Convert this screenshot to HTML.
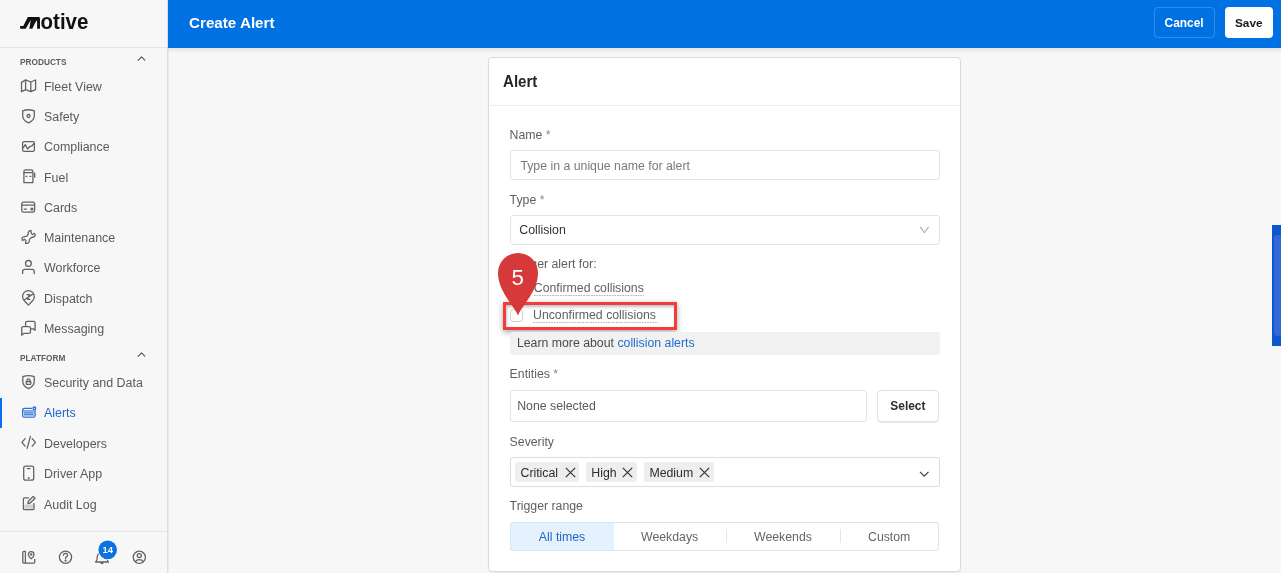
<!DOCTYPE html>
<html><head><meta charset="utf-8"><style>
html,body{margin:0;padding:0;}
body{width:1281px;height:573px;overflow:hidden;position:relative;background:#f7f7f7;font-family:"Liberation Sans", sans-serif;}
#w{position:absolute;left:0;top:0;width:1281px;height:573px;will-change:transform;}
.t{position:absolute;white-space:nowrap;line-height:1;}
.r{position:absolute;}
</style></head><body>
<div id="w">
<div class="r" style="left:0.00px;top:0.00px;width:167.00px;height:573.00px;background:#f7f7f7;"></div>
<div class="r" style="left:167.00px;top:0.00px;width:1.00px;height:573.00px;background:#dedede;"></div>
<div class="r" style="left:168.00px;top:48.00px;width:1.00px;height:525.00px;background:#ececec;"></div>
<div class="r" style="left:0.00px;top:47.00px;width:167.00px;height:1.00px;background:#e4e4e4;"></div>
<svg class="r" style="left:0;top:0" width="168" height="48" viewBox="0 0 168 48">
<path d="M20.1 28.8 V25.9 H23.3 L27.8 17 H38.6 Q40 17 40 18.4 V28.8 H37.1 V21.4 L36.4 20.4 L32.3 28.8 H29.3 L30.8 20 L25.7 28.8 Z" fill="#111"/>
<text x="40.6" y="28.8" font-family="Liberation Sans" font-weight="700" font-size="22.5" fill="#111" textLength="47.8" lengthAdjust="spacingAndGlyphs">otive</text>
</svg>
<div class="t" style="left:20.00px;top:57.73px;font-size:9.3px;color:#5c5c5c;font-weight:700;transform:scaleX(0.89);transform-origin:0 0;">PRODUCTS</div>
<div class="t" style="left:20.00px;top:354.03px;font-size:9.3px;color:#5c5c5c;font-weight:700;transform:scaleX(0.89);transform-origin:0 0;">PLATFORM</div>
<svg class="r" style="left:137px;top:56.3px" width="10" height="7" viewBox="0 0 10 7"><path d="M1.1 4.4 L4.5 0.9 L7.8 4.2" fill="none" stroke="#555" stroke-width="1.15" stroke-linecap="round" stroke-linejoin="round"/></svg>
<svg class="r" style="left:137px;top:352.0px" width="10" height="7" viewBox="0 0 10 7"><path d="M1.1 4.4 L4.5 0.9 L7.8 4.2" fill="none" stroke="#555" stroke-width="1.15" stroke-linecap="round" stroke-linejoin="round"/></svg>
<div class="t" style="left:44.00px;top:80.86px;font-size:12.45px;color:#5a5a5a;font-weight:400;">Fleet View</div>
<div class="t" style="left:44.00px;top:111.13px;font-size:12.45px;color:#5a5a5a;font-weight:400;">Safety</div>
<div class="t" style="left:44.00px;top:141.40px;font-size:12.45px;color:#5a5a5a;font-weight:400;">Compliance</div>
<div class="t" style="left:44.00px;top:171.67px;font-size:12.45px;color:#5a5a5a;font-weight:400;">Fuel</div>
<div class="t" style="left:44.00px;top:201.94px;font-size:12.45px;color:#5a5a5a;font-weight:400;">Cards</div>
<div class="t" style="left:44.00px;top:232.21px;font-size:12.45px;color:#5a5a5a;font-weight:400;">Maintenance</div>
<div class="t" style="left:44.00px;top:262.48px;font-size:12.45px;color:#5a5a5a;font-weight:400;">Workforce</div>
<div class="t" style="left:44.00px;top:292.75px;font-size:12.45px;color:#5a5a5a;font-weight:400;">Dispatch</div>
<div class="t" style="left:44.00px;top:323.02px;font-size:12.45px;color:#5a5a5a;font-weight:400;">Messaging</div>
<div class="t" style="left:44.00px;top:376.96px;font-size:12.45px;color:#5a5a5a;font-weight:400;">Security and Data</div>
<div class="t" style="left:44.00px;top:407.31px;font-size:12.45px;color:#1a66c9;font-weight:400;">Alerts</div>
<div class="t" style="left:44.00px;top:437.66px;font-size:12.45px;color:#5a5a5a;font-weight:400;">Developers</div>
<div class="t" style="left:44.00px;top:468.01px;font-size:12.45px;color:#5a5a5a;font-weight:400;">Driver App</div>
<div class="t" style="left:44.00px;top:499.16px;font-size:12.45px;color:#5a5a5a;font-weight:400;">Audit Log</div>
<div class="r" style="left:0.00px;top:398.00px;width:1.60px;height:30.00px;background:#0a6ef0;"></div>
<div class="r" style="left:0.00px;top:530.50px;width:167.00px;height:1.00px;background:#e2e2e2;"></div>
<svg class="r" style="left:0;top:0" width="168" height="573" viewBox="0 0 168 573" fill="none" stroke="#636363" stroke-width="1.3" stroke-linejoin="round" stroke-linecap="round">
<path d="M21.5 82.4 L25.6 79.9 L30.8 82 L35.6 80 V89.6 L30.8 91.7 L25.6 89.6 L21.5 91.7 Z M25.6 79.9 V89.6 M30.8 82 V91.7"/>
<path d="M22.7 110.9 Q28.5 108.6 34.3 110.9 V115.8 Q34.3 120.3 28.5 122.9 Q22.7 120.3 22.7 115.8 Z"/>
<circle cx="28.5" cy="116" r="1.5"/>
<rect x="22.6" y="141.6" width="11.8" height="9.7" rx="1.6"/>
<path d="M23.4 147.6 L25.3 144.6 L27.7 149 L29.9 146.4 L31.6 146.2 L33.8 143.8"/>
<path d="M23.9 182.6 V171.5 Q23.9 169.9 25.5 169.9 H31.3 Q32.9 169.9 32.9 171.5 V182.6 Z M23.9 172.6 H32.9 M25.9 176.3 H26.9 M29.9 176.3 H30.9 M34.7 173.2 V177.2"/>
<rect x="21.8" y="202.1" width="12.8" height="10.1" rx="1.8"/>
<path d="M21.8 205.2 H34.6 M24.2 209.1 H26.4"/>
<circle cx="31.9" cy="209.1" r="0.9" fill="#636363"/>
<path d="M28.4 232.2 Q29.2 230.6 30.9 230.5 L31.4 233.3 L32.4 234.5 L34.5 233.5 Q35.6 234.4 35 235.6 Q34.4 236.8 33.2 237.1 L31.6 237.5 L29.5 239.2 Q29.4 240.5 29.1 241.7 Q28.6 243.3 27.4 243.4 L25.5 243.4 Q25.6 242 26 240.6 L24.8 239.4 L22.5 240.4 Q21.9 239.3 22.1 238.3 Q22.6 237 23.7 236.8 L26.9 236.1 L28.1 234.3 Z"/>
<circle cx="28.4" cy="263.4" r="2.9"/>
<path d="M22.6 273.5 V271.4 Q22.6 269.3 24.7 269.3 H32.1 Q34.2 269.3 34.2 271.4 V273.5"/>
<path d="M28.45 305.1 L24.3 300.7 A5.9 5.9 0 1 1 32.6 300.7 Z M24.5 299.8 L33.4 293.6 M27 294.6 H29.5 L27.6 299.3 H29.9"/>
<path d="M25.6 326.4 V322.8 Q25.6 321.3 27.1 321.3 H33.6 Q35.1 321.3 35.1 322.8 V330.2 L33.2 328.9 H30.6"/>
<path d="M21.7 335.2 V328.1 Q21.7 326.6 23.2 326.6 H29 Q30.5 326.6 30.5 328.1 V331.8 Q30.5 333.3 29 333.3 H23.9 Z"/>
<path d="M22.8 376.7 Q28.5 374.4 34.2 376.7 V381.6 Q34.2 386.1 28.5 388.7 Q22.8 386.1 22.8 381.6 Z"/>
<path d="M27 381.5 V380.4 Q27 378.8 28.5 378.8 Q30 378.8 30 380.4 V381.5"/>
<rect x="26.2" y="381.5" width="4.6" height="2.8" rx="0.5"/>
<path d="M25.1 438.6 L21.9 442.4 L25.1 446.2 M32.2 438.6 L35.4 442.4 L32.2 446.2 M30.4 436.4 L27.2 448.4"/>
<rect x="23.7" y="466.2" width="10" height="14" rx="2"/>
<path d="M27.4 468.6 H30"/>
<circle cx="28.7" cy="478" r="0.35" fill="#636363"/>
<path d="M28.6 497.9 H24.6 Q23.4 497.9 23.4 499.1 V508.4 Q23.4 509.6 24.6 509.6 H32.8 Q34 509.6 34 508.4 V503.6"/>
<rect x="24.4" y="504.6" width="8.6" height="4" fill="#cfcfcf" stroke="none"/>
<path d="M27.8 503.6 L28.4 501.2 L33.2 496.4 L35 498.2 L30.2 503 Z"/>
<path d="M25.2 551.3 H24.1 Q22.8 551.3 22.8 552.6 V561.9 Q22.8 563.2 24.1 563.2 H33.4 Q34.7 563.2 34.7 561.9 V559.3 M25.4 551.3 V563.2"/>
<path d="M31.2 558.8 Q28.4 556.6 28.4 554.4 A2.8 2.8 0 0 1 34 554.4 Q34 556.6 31.2 558.8 Z"/>
<circle cx="31.2" cy="554.4" r="0.6" fill="#636363"/>
<circle cx="65.5" cy="557.2" r="6.1"/>
<path d="M63.5 555.3 Q63.5 553.3 65.6 553.3 Q67.6 553.3 67.6 555.1 Q67.6 556.6 65.6 557.4 V558.6"/>
<circle cx="65.6" cy="560.6" r="0.5" fill="#636363"/>
<path d="M95.6 562 Q97.2 560.6 97.2 557.6 Q97.2 552.6 102 552.6 Q106.8 552.6 106.8 557.6 Q106.8 560.6 108.4 562 Z M100.6 562 Q100.6 563.5 102 563.5 Q103.4 563.5 103.4 562"/>
<circle cx="139.3" cy="557.3" r="6.1"/>
<circle cx="139.3" cy="555.6" r="2"/>
<path d="M135.4 561.6 Q136.6 559.6 139.3 559.6 Q142 559.6 143.2 561.6"/>
<circle cx="107.7" cy="549.8" r="9.9" fill="#f7f7f7" stroke="none"/>
<circle cx="107.7" cy="549.8" r="9.3" fill="#0a72e3" stroke="none"/>
<text x="107.7" y="553.2" text-anchor="middle" font-family="Liberation Sans" font-weight="700" font-size="9.5" fill="#fff" stroke="none">14</text>
</svg>
<svg class="r" style="left:0;top:0" width="168" height="573" viewBox="0 0 168 573" fill="none" stroke="#2a6fd6" stroke-width="1.3" stroke-linejoin="round" stroke-linecap="round">
<rect x="22.7" y="408.4" width="12.3" height="8.8" rx="1.5"/>
<rect x="23.6" y="411.2" width="10.5" height="5.2" fill="#b6cdf2" stroke="none"/>
<path d="M22.7 410.8 H35 M24.5 412.8 H33 M24.5 414.6 H33" stroke-width="0.9"/>
<circle cx="34.4" cy="408.3" r="2.1" fill="#f7f7f7" stroke="none"/>
<circle cx="34.4" cy="408.3" r="1.3" fill="#f7f7f7"/>
</svg>
<div class="r" style="left:168.00px;top:0.00px;width:1113.00px;height:48.00px;background:#0071e3;"></div>
<div class="r" style="left:168.00px;top:48.00px;width:1113.00px;height:5.00px;background:linear-gradient(rgba(0,0,0,0.08),rgba(0,0,0,0));"></div>
<div class="t" style="left:189.00px;top:15.33px;font-size:15.2px;color:#ffffff;font-weight:700;">Create Alert</div>
<div class="r" style="left:1154.00px;top:7.00px;width:61.00px;height:31.00px;border:1px solid rgba(255,255,255,0.2);border-radius:4px;box-sizing:border-box;"></div>
<div class="t" style="left:1164.60px;top:17.93px;font-size:11.9px;color:#ffffff;font-weight:700;">Cancel</div>
<div class="r" style="left:1225.00px;top:7.00px;width:48.00px;height:31.00px;background:#fff;border-radius:4px;"></div>
<div class="t" style="left:1235.00px;top:18.01px;font-size:11.8px;color:#1a1a1a;font-weight:700;">Save</div>
<div class="r" style="left:1271.50px;top:224.50px;width:10.00px;height:121.50px;background:#0a58d0;"></div>
<div class="r" style="left:1273.50px;top:235.00px;width:10.00px;height:101.00px;background:#3169d8;border-radius:3px;"></div>
<div class="r" style="left:488.40px;top:57.20px;width:472.60px;height:514.80px;background:#fff;border:1px solid #dadada;border-radius:4px;box-sizing:border-box;box-shadow:0 1px 2px rgba(0,0,0,0.06);"></div>
<div class="t" style="left:503.20px;top:74.39px;font-size:15.6px;color:#262626;font-weight:700;transform:scaleX(0.966);transform-origin:0 0;">Alert</div>
<div class="r" style="left:490.00px;top:105.00px;width:470.00px;height:1.00px;background:#ececec;"></div>
<div class="t" style="left:509.60px;top:128.89px;font-size:12.3px;color:#5f5f5f;font-weight:400;">Name <span style="color:#8a8a8a">*</span></div>
<div class="r" style="left:510.00px;top:150.00px;width:430.00px;height:30.00px;border:1px solid #e4e4e4;border-radius:3px;box-sizing:border-box;background:#fff;"></div>
<div class="t" style="left:520.40px;top:160.39px;font-size:12.3px;color:#7a7a7a;font-weight:400;">Type in a unique name for alert</div>
<div class="t" style="left:509.60px;top:193.89px;font-size:12.3px;color:#5f5f5f;font-weight:400;">Type <span style="color:#8a8a8a">*</span></div>
<div class="r" style="left:510.00px;top:215.00px;width:430.00px;height:30.00px;border:1px solid #e4e4e4;border-radius:3px;box-sizing:border-box;background:#fff;"></div>
<div class="t" style="left:519.30px;top:223.99px;font-size:12.3px;color:#333333;font-weight:400;">Collision</div>
<svg class="r" style="left:919px;top:225px" width="11" height="9" viewBox="0 0 11 9"><path d="M1.1 1.9 L5.4 7.7 L9.6 1.9" fill="none" stroke="#a8a8a8" stroke-width="1.05"/></svg>
<div class="t" style="left:509.60px;top:258.09px;font-size:12.3px;color:#5f5f5f;font-weight:400;">Trigger alert for:</div>
<div class="r" style="left:510.00px;top:282.00px;width:13.00px;height:13.00px;border:1px solid #cfcfcf;border-radius:3px;box-sizing:border-box;background:#fff;"></div>
<div class="t" style="left:533.80px;top:282.49px;font-size:12.3px;color:#616161;font-weight:400;">Confirmed collisions</div>
<div class="r" style="left:533.80px;top:295.20px;width:110.70px;height:1.00px;background-image:linear-gradient(90deg,#b8b8b8 50%,transparent 50%);background-size:2.6px 1px;"></div>
<div class="r" style="left:503.30px;top:302.00px;width:173.50px;height:27.70px;border:3px solid #f23b3b;box-sizing:border-box;box-shadow:0 2px 6px rgba(0,0,0,0.35), inset 1px 2px 3px rgba(0,0,0,0.25);"></div>
<div class="r" style="left:510.00px;top:309.00px;width:13.00px;height:13.00px;border:1px solid #cfcfcf;border-radius:3px;box-sizing:border-box;background:#fff;"></div>
<div class="t" style="left:533.00px;top:308.99px;font-size:12.3px;color:#616161;font-weight:400;">Unconfirmed collisions</div>
<div class="r" style="left:533.00px;top:322.20px;width:125.30px;height:1.00px;background-image:linear-gradient(90deg,#b8b8b8 50%,transparent 50%);background-size:2.6px 1px;"></div>
<div class="r" style="left:510.00px;top:331.60px;width:430.00px;height:23.70px;background:#f1f1f1;border-radius:3px;"></div>
<div class="t" style="left:516.90px;top:336.59px;font-size:12.3px;color:#4a4a4a;font-weight:400;">Learn more about <span style="color:#1f6fd1">collision alerts</span></div>
<div class="t" style="left:509.60px;top:367.59px;font-size:12.3px;color:#5f5f5f;font-weight:400;">Entities <span style="color:#8a8a8a">*</span></div>
<div class="r" style="left:510.00px;top:389.80px;width:357.00px;height:32.50px;border:1px solid #e4e4e4;border-radius:3px;box-sizing:border-box;background:#fff;"></div>
<div class="t" style="left:517.20px;top:399.59px;font-size:12.3px;color:#5a5a5a;font-weight:400;">None selected</div>
<div class="r" style="left:877.00px;top:389.80px;width:61.50px;height:32.50px;border:1px solid #e1e1e1;border-radius:4px;box-sizing:border-box;background:#fff;box-shadow:0 1px 1px rgba(0,0,0,0.08);"></div>
<div class="t" style="left:890.30px;top:401.08px;font-size:11.95px;color:#2e2e2e;font-weight:700;">Select</div>
<div class="t" style="left:509.60px;top:435.79px;font-size:12.3px;color:#5f5f5f;font-weight:400;">Severity</div>
<div class="r" style="left:510.00px;top:457.20px;width:430.00px;height:30.20px;border:1px solid #dcdcdc;border-radius:3px;box-sizing:border-box;background:#fff;"></div>
<div class="r" style="left:515.40px;top:462.30px;width:63.60px;height:19.70px;background:#eeeeee;border-radius:2px;"></div>
<div class="t" style="left:520.50px;top:466.89px;font-size:12.3px;color:#2c2c2c;font-weight:400;">Critical</div>
<svg class="r" style="left:564.6px;top:466.5px" width="11" height="11" viewBox="0 0 11 11"><path d="M0.8 0.8 L10.2 10.2 M10.2 0.8 L0.8 10.2" stroke="#333" stroke-width="1.2"/></svg>
<div class="r" style="left:586.20px;top:462.30px;width:50.60px;height:19.70px;background:#eeeeee;border-radius:2px;"></div>
<div class="t" style="left:591.30px;top:466.89px;font-size:12.3px;color:#2c2c2c;font-weight:400;">High</div>
<svg class="r" style="left:622.4px;top:466.5px" width="11" height="11" viewBox="0 0 11 11"><path d="M0.8 0.8 L10.2 10.2 M10.2 0.8 L0.8 10.2" stroke="#333" stroke-width="1.2"/></svg>
<div class="r" style="left:644.30px;top:462.30px;width:69.30px;height:19.70px;background:#eeeeee;border-radius:2px;"></div>
<div class="t" style="left:649.40px;top:466.89px;font-size:12.3px;color:#2c2c2c;font-weight:400;">Medium</div>
<svg class="r" style="left:699.2px;top:466.5px" width="11" height="11" viewBox="0 0 11 11"><path d="M0.8 0.8 L10.2 10.2 M10.2 0.8 L0.8 10.2" stroke="#333" stroke-width="1.2"/></svg>
<svg class="r" style="left:917.5px;top:468.5px" width="12" height="9" viewBox="0 0 12 9"><path d="M2 2.9 L6.2 7.1 L10.5 2.9" fill="none" stroke="#444" stroke-width="1.3"/></svg>
<div class="t" style="left:509.60px;top:500.09px;font-size:12.3px;color:#5f5f5f;font-weight:400;">Trigger range</div>
<div class="r" style="left:510.00px;top:521.90px;width:429.00px;height:29.00px;border:1px solid #e3e3e3;border-radius:3px;box-sizing:border-box;background:#fff;"></div>
<div class="r" style="left:510.00px;top:521.90px;width:103.60px;height:29.00px;background:#e5f2fd;border:1px solid #d6e8f8;border-right:none;box-sizing:border-box;border-radius:3px 0 0 3px;"></div>
<div class="r" style="left:726.20px;top:529.00px;width:1.00px;height:14.00px;background:#e6e6e6;"></div>
<div class="r" style="left:840.40px;top:529.00px;width:1.00px;height:14.00px;background:#e6e6e6;"></div>
<div class="t" style="left:538.80px;top:530.89px;font-size:12.3px;color:#1f66c9;font-weight:400;">All times</div>
<div class="t" style="left:641.00px;top:530.89px;font-size:12.3px;color:#666666;font-weight:400;">Weekdays</div>
<div class="t" style="left:754.00px;top:530.89px;font-size:12.3px;color:#666666;font-weight:400;">Weekends</div>
<div class="t" style="left:868.00px;top:530.89px;font-size:12.3px;color:#666666;font-weight:400;">Custom</div>
<svg class="r" style="left:496px;top:251px" width="44" height="66" viewBox="0 0 44 66">
<path d="M22 64.4 C17 53 2 40 2 22 A20 20 0 0 1 42 22 C42 40 27 53 22 64.4 Z" fill="#d7393b"/>
</svg>
<div class="t" style="left:511.60px;top:267.42px;font-size:22.3px;color:#ffffff;font-weight:400;">5</div>
</div>
</body></html>
